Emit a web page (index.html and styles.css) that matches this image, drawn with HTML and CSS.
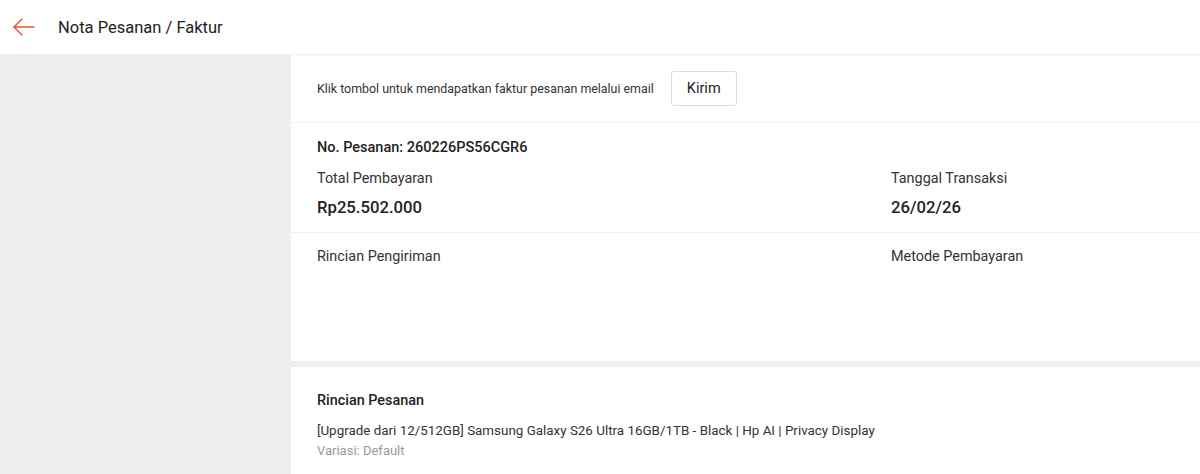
FILE: index.html
```html
<!DOCTYPE html>
<html lang="id">
<head>
<meta charset="utf-8">
<title>Nota Pesanan / Faktur</title>
<link rel="stylesheet" href="styles.css">
</head>
<body>
<header class="topbar">
  <svg class="back" width="24" height="24" viewBox="0 0 24 24" fill="none" stroke="#ee4d2d" stroke-width="1.4" stroke-linecap="round" stroke-linejoin="round"><path d="M22 12H2"/><path d="M10 4L2 12l8 8"/></svg>
  <h1 class="title">Nota Pesanan / Faktur</h1>
</header>
<div class="layout">
  <aside class="sidebar"></aside>
  <main class="content">
    <section class="email-row">
      <span class="email-text">Klik tombol untuk mendapatkan faktur pesanan melalui email</span>
      <button class="btn">Kirim</button>
    </section>
    <section class="summary">
      <div class="order-no">No. Pesanan: 260226PS56CGR6</div>
      <div class="cols">
        <div class="col-left">
          <div class="label">Total Pembayaran</div>
          <div class="value">Rp25.502.000</div>
        </div>
        <div class="col-right">
          <div class="label">Tanggal Transaksi</div>
          <div class="value">26/02/26</div>
        </div>
      </div>
    </section>
    <section class="shipping">
      <div class="col-left"><div class="label">Rincian Pengiriman</div></div>
      <div class="col-right"><div class="label">Metode Pembayaran</div></div>
    </section>
    <section class="details">
      <div class="details-title">Rincian Pesanan</div>
      <div class="product">[Upgrade dari 12/512GB] Samsung Galaxy S26 Ultra 16GB/1TB - Black | Hp AI | Privacy Display</div>
      <div class="variant">Variasi: Default</div>
    </section>
  </main>
</div>
</body>
</html>
```
FILE: styles.css
```css
* { box-sizing: border-box; }
html, body { margin: 0; padding: 0; }
body {
  font-family: Roboto, "Noto Sans", Arial, sans-serif;
  color: #222;
  background: #fff;
  height: 474px;
  overflow: hidden;
}
.topbar {
  height: 55px;
  display: flex;
  align-items: center;
  padding-left: 12px;
  background: #fff;
  border-bottom: 1px solid #f0f0f0;
  box-shadow: 0 1px 2px rgba(0,0,0,0.03);
  position: relative;
  z-index: 1;
}
.back { display: block; }
.title {
  margin: 0 0 0 22px;
  font-size: 16.5px;
  font-weight: 400;
  color: #222;
}
.layout {
  display: flex;
  height: 419px;
}
.sidebar {
  width: 291px;
  flex: none;
  background: #efefef;
}
.content {
  flex: 1;
  background: #fff;
  padding-left: 26px;
}
.email-row {
  height: 68px;
  display: flex;
  align-items: center;
  border-bottom: 1px solid #f0f0f0;
  margin-left: -26px;
  padding-left: 26px;
}
.email-text {
  font-size: 12.4px;
  color: #333;
}
.btn {
  margin-left: 17px;
  width: 66px;
  height: 35px;
  border: 1px solid #dcdcdc;
  border-radius: 3px;
  background: #fff;
  font-family: inherit;
  font-size: 14.5px;
  color: #222;
}
.summary {
  height: 110px;
  margin-left: -26px;
  padding: 15px 0 0 26px;
  border-bottom: 1px solid #efefef;
}
.order-no {
  font-size: 14.5px;
  font-weight: 500;
  line-height: 20px;
}
.cols, .shipping {
  display: flex;
}
.cols { margin-top: 11px; }
.col-left { width: 574px; flex: none; }
.label {
  font-size: 14.4px;
  line-height: 20px;
  color: #333;
}
.value {
  font-size: 16.7px;
  font-weight: 500;
  line-height: 22px;
  margin-top: 8px;
}
.shipping {
  height: 134px;
  padding-top: 14px;
  border-bottom: 6px solid #eeeeee;
  margin-left: -26px;
  padding-left: 26px;
}
.details {
  padding-top: 24px;
}
.details-title {
  font-size: 14.4px;
  font-weight: 500;
  line-height: 20px;
}
.product {
  margin-top: 10px;
  font-size: 13.4px;
  line-height: 20px;
  color: #333;
}
.variant {
  font-size: 13px;
  line-height: 20px;
  color: #999;
}
```
